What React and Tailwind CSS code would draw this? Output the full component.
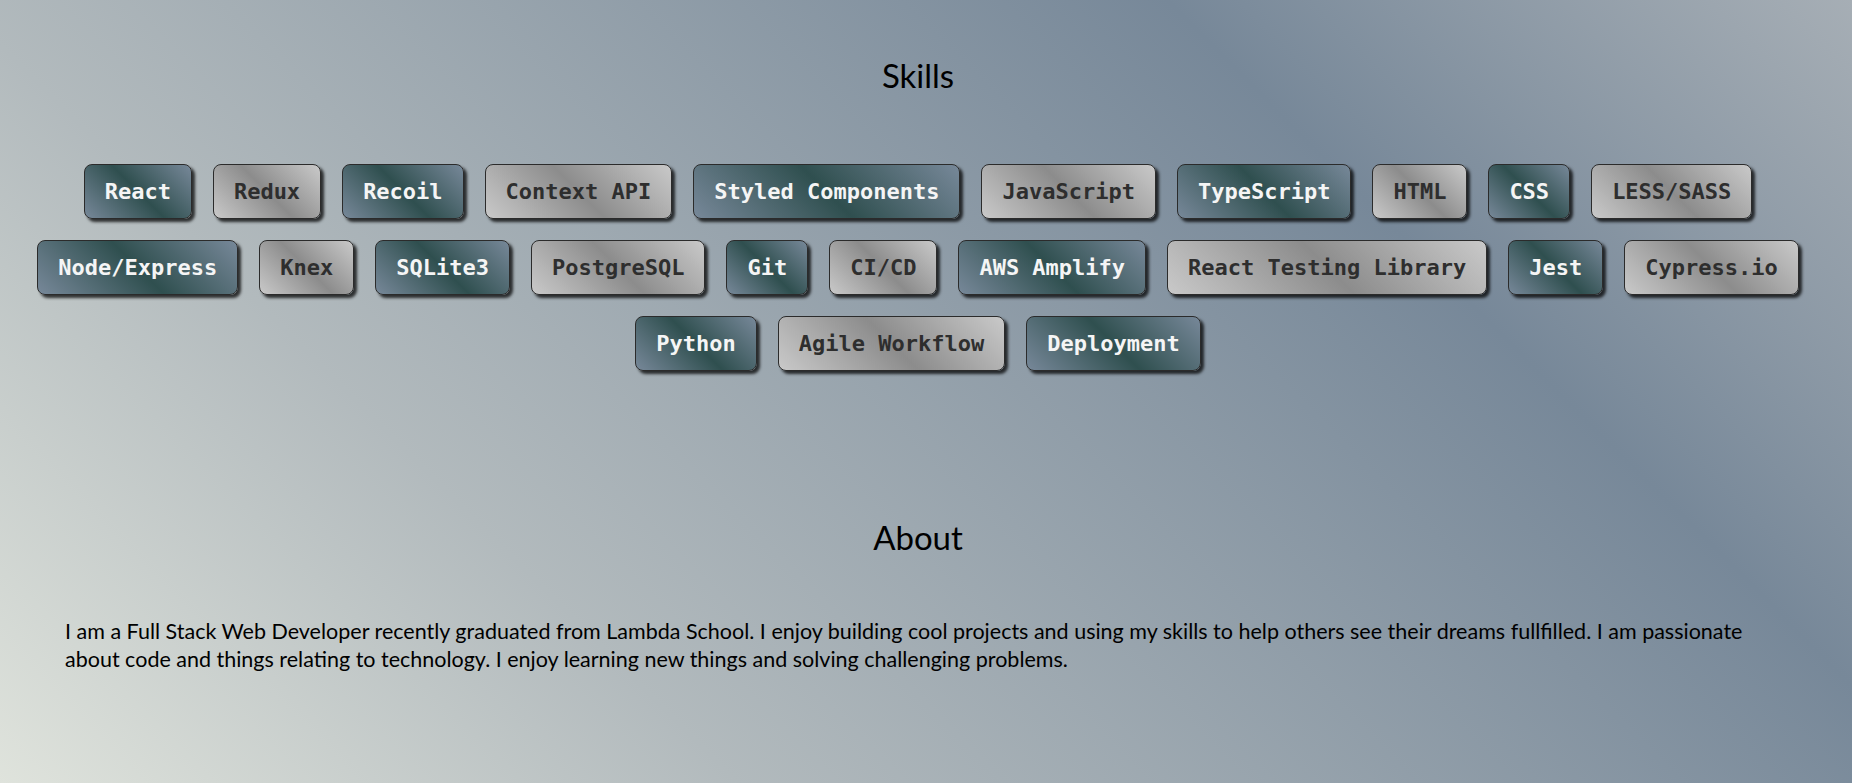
const skills = [
  'React',
  'Redux',
  'Recoil',
  'Context API',
  'Styled Components',
  'JavaScript',
  'TypeScript',
  'HTML',
  'CSS',
  'LESS/SASS',
  'Node/Express',
  'Knex',
  'SQLite3',
  'PostgreSQL',
  'Git',
  'CI/CD',
  'AWS Amplify',
  'React Testing Library',
  'Jest',
  'Cypress.io',
  'Python',
  'Agile Workflow',
  'Deployment',
]

const SkillTag = ({ name, dark }) => {
  return (
    <span
      className={
        dark
          ? 'm-[10.5px] rounded-lg border border-[#2b2b2b] bg-[linear-gradient(45deg,#778899,#2f4f4f,#778899)] px-[20px] py-[13px] text-[22px] leading-[27px] font-bold text-[#f5f5f5] shadow-[3px_3px_3px_rgba(0,0,0,0.75)]'
          : 'm-[10.5px] rounded-lg border border-[#2b2b2b] bg-[linear-gradient(45deg,#c9c9c9,#8c8c8c,#c9c9c9)] px-[20px] py-[13px] text-[22px] leading-[27px] font-bold text-[#2e2e2e] shadow-[3px_3px_3px_rgba(0,0,0,0.75)]'
      }
      style={{ fontFamily: '"DejaVu Sans Mono", "Liberation Mono", monospace' }}
    >
      {name}
    </span>
  )
}

const App = () => {
  return (
    <div
      className="min-h-screen bg-[linear-gradient(45deg,#dfe3dc_0%,#b2babd_28%,#778899_74%,#a6aeb5_100%)] pr-[16px] text-black"
      style={{ fontFamily: 'Lato, "Noto Sans", sans-serif' }}
    >
      <section className="pt-[55px]">
        <h2 className="text-center text-[33px] leading-[40px] font-normal">Skills</h2>
        <div className="mt-[58px] flex flex-wrap justify-center px-[10px]">
          {skills.map((skill, i) => (
            <SkillTag key={skill} name={skill} dark={i % 2 === 0} />
          ))}
        </div>
      </section>
      <section className="pt-[136px] pb-[80px]">
        <h2 className="text-center text-[33px] leading-[40px] font-normal">About</h2>
        <p className="mt-[60px] px-[65px] text-[21.5px] leading-[28px]">
          I am a Full Stack Web Developer recently graduated from Lambda School. I enjoy building cool projects and
          using my skills to help others see their dreams fullfilled. I am passionate about code and things relating to
          technology. I enjoy learning new things and solving challenging problems.
        </p>
      </section>
    </div>
  )
}

export default App
